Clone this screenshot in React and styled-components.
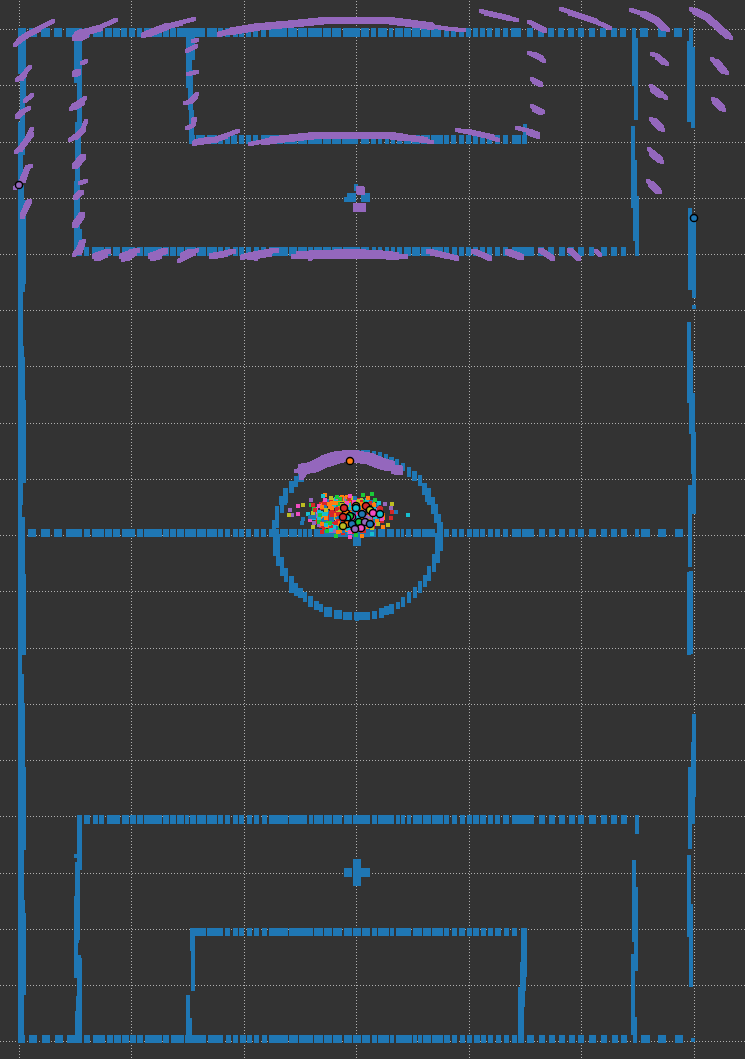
import React from "react";
import styled, { createGlobalStyle } from "styled-components";

const C = {
  blue: "#1f77b4",
  orange: "#ff7f0e",
  green: "#1ac938",
  red: "#d62728",
  purple: "#9467bd",
  pink: "#f14cc1",
  olive: "#bcbd22",
  cyan: "#17becf",
};

const GlobalStyle = createGlobalStyle`
  body {
    margin: 0;
    background: #333333;
  }
`;

const Viewer = styled.main`
  width: 100%;
  background: #333333;
`;

const FieldMap = styled.svg`
  display: block;
  width: 100%;
  height: auto;
  shape-rendering: crispEdges;
`;

const GridLine = styled.path`
  fill: none;
  stroke: #b0b0b0;
  stroke-width: 1;
  stroke-dasharray: 1 2;
`;

const Cell = styled.rect`
  fill: ${(p) => p.$tone};
`;

const Scan = styled.path`
  fill: ${C.purple};
`;

const Pose = styled.circle`
  fill: ${(p) => p.$tone};
  stroke: #000000;
  stroke-width: 1.5;
  shape-rendering: geometricPrecision;
`;

const GRID_X = [19, 131, 244, 356, 469, 581, 694];
const GRID_Y = [29, 85, 142, 198, 254, 310, 366, 423, 479, 535, 591, 648, 704, 760, 816, 873, 929, 985, 1041];

// Runs of marked cells along each horizontal field line: [top, height, "x0-x1 ..."]
const MID_RUNS =
  "225-230 233-238 239-244 247-252 254-259 262-267 269-288 289-313 314-323 324-332 333-342 344-352 353-361 362-370 372-377 378-389 390-394";
const ROWS = [
  [28, 9, "18-26 29-37 41-50 54-62 66-82 84-90 93-103 105-112 113-120 121-127 129-135 137-142 144-162 163-169 170-176 177-184 184-205 207-217 218-223 " +
    "225-230 233-238 239-244 246-251 253-258 261-266 269-287 288-297 298-307 308-322 323-331 332-341 343-360 361-369 371-376 378-387 389-393 395-403 404-411 412-420 421-430 431-441 444-449 451-456 459-464 466-471 473-478 " +
    "480-485 487-492 495-500 503-508 511-521 527-533 538-544 548-554 558-564 568-574 578-584 589-595 600-606 611-617 620-626 640-648 658-666 674-682"],
  [135, 9, "189-195 196-205 207-217 218-223 225-230 231-237 239-244 246-251 253-258 261-283 284-297 298-307 308-322 323-331 332-341 342-358 361-369 371-376 378-382 385-389 391-395 397-402 404-411 412-420 421-430 431-443 444-449 451-456 459-464 466-471 473-478 480-485 487-492 495-500 503-508 512-521 522-527"],
  [247, 9, "84-89 92-104 105-111 113-120 122-135 137-143 144-162 163-169 170-176 177-184 185-196 197-206 207-217 218-223 225-230 233-238 239-244 246-251 254-259 261-266 269-288 289-297 298-307 308-313 314-322 323-331 332-342 343-360 361-369 372-376 378-382 385-389 391-395 397-402 404-411 412-420 421-431 432-443 444-449 452-457 459-464 466-471 473-478 480-485 487-492 495-500 503-508 512-521 521-534 538-544 548-554 559-565 568-574 578-584 589-594 601-607 611-617 621-626"],
  [529, 8, "28-36 41-50 54-62 66-82 84-90 92-104 105-112 113-120 122-135 137-143 144-162 163-169 170-176 177-184 185-196 197-206 207-217 218-223 225-230 233-238 239-244 246-251 254-259 261-266 269-279 280-288 289-297 298-302 303-307 308-312 314-376 378-385 387-394 396-400 401-404 406-411 413-421 422-435 444-449 452-457 459-464 467-472 473-479 480-485 488-493 495-500 503-508 512-521 522-534 539-545 549-555 559-565 569-575 578-584 589-596 601-607 611-617 621-627 635-639 641-650 658-666 675-683"],
  [815, 9, "77-82 84-90 93-98 99-104 107-120 122-129 130-136 137-143 144-162 163-169 170-176 177-184 185-189 190-196 197-206 207-217 218-223 225-230 233-238 239-244 247-252 254-259 262-267 269-288 289-307 309-313 314-323 324-332 333-342 344-352 353-370 372-377 378-390 390-394 396-400 401-405 407-411 413-422 423-431 432-443 444-449 452-457 460-465 467-472 473-479 480-486 488-493 495-500 503-509 512-534 539-545 549-555 559-565 569-575 578-584 589-596 601-607 611-617 621-627"],
  [928, 8, "190-206 207-223 " + MID_RUNS + " 396-411 413-422 423-431 432-443 444-449 452-457 459-465 467-472 473-479 481-486 488-493 495-501 504-509 512-517 521-527"],
  [1035, 8, "18-25 29-37 42-50 55-63 67-82 84-90 93-105 107-113 114-121 122-129 130-136 137-143 145-162 163-169 171-184 185-206 208-223 226-231 233-238 240-246 247-252 254-259 262-267 269-288 289-298 299-313 314-323 324-332 333-342 344-352 353-361 362-370 372-377 378-389 390-394 396-412 413-417 418-422 423-431 432-443 444-450 452-457 460-465 467-472 474-480 481-486 488-493 496-501 504-509 512-517 518-524 527-534 539-545 549-555 559-565 569-575 578-584 589-596 601-607 612-618 621-627 641-650 658-666 675-683"],
];

// Upright lines, the centre circle and the spots: x0, y0, x1, y1
const BLOCKS = [
  // left touchline
  [18, 28, 26, 74], [20, 74, 26, 103], [20, 103, 25, 122], [18, 122, 25, 155], [18, 155, 23, 185], [18, 185, 24, 200],
  [18, 200, 26, 284], [18, 284, 25, 292], [18, 292, 23, 346], [18, 346, 24, 357], [18, 357, 25, 400], [18, 400, 26, 483],
  [18, 483, 23, 505], [18, 505, 22, 517], [18, 517, 25, 574], [18, 574, 26, 655], [18, 655, 22, 674], [18, 674, 24, 703],
  [18, 703, 25, 767], [18, 767, 26, 850], [18, 850, 24, 900], [18, 900, 25, 913], [18, 913, 26, 995], [18, 995, 24, 1043],
  // right touchline
  [689, 28, 693, 47], [687, 41, 693, 122], [691, 47, 695, 128], [688, 208, 692, 290], [692, 216, 696, 298], [692, 305, 696, 309],
  [687, 322, 691, 403], [689, 351, 693, 434], [691, 393, 695, 434], [691, 432, 696, 474], [692, 474, 696, 514], [688, 485, 692, 567],
  [691, 485, 694, 514], [687, 572, 691, 655], [689, 571, 693, 654], [692, 714, 696, 797], [691, 742, 695, 824], [688, 767, 692, 849],
  [687, 855, 691, 937], [689, 904, 693, 987], [691, 1038, 695, 1042],
  // penalty areas
  [74, 28, 82, 83], [77, 83, 82, 130], [75, 122, 81, 160], [75, 160, 80, 185], [74, 181, 80, 229], [74, 229, 82, 256],
  [632, 28, 636, 86], [634, 38, 638, 120], [631, 126, 635, 208], [633, 160, 637, 241], [635, 196, 639, 256],
  [77, 815, 82, 870], [74, 854, 78, 858], [75, 862, 80, 940], [74, 896, 79, 943], [74, 943, 78, 978], [77, 955, 81, 1040],
  [77, 958, 82, 1043], [76, 996, 82, 1043], [75, 1011, 82, 1043],
  [635, 815, 639, 834], [632, 860, 636, 942], [634, 887, 638, 971], [631, 954, 635, 1035], [633, 1017, 637, 1043],
  // goal areas
  [186, 28, 195, 60], [186, 60, 192, 88], [188, 70, 193, 110], [189, 110, 194, 144], [523, 124, 527, 144],
  [190, 928, 195, 951], [191, 951, 195, 991], [186, 995, 190, 1043], [188, 1018, 192, 1043],
  [521, 928, 527, 977], [520, 962, 526, 991], [518, 987, 525, 1007], [518, 1007, 524, 1043],
  // spots
  [354, 184, 358, 191], [347, 193, 356, 202], [344, 197, 348, 202], [361, 193, 370, 202],
  [344, 868, 352, 877], [353, 859, 361, 886], [361, 868, 370, 877], [353, 534, 361, 546],
  // centre circle, clockwise from the top
  [344, 450, 360, 458], [361, 450, 370, 458], [372, 451, 376, 459], [378, 452, 382, 460], [384, 454, 388, 462], [389, 457, 394, 465],
  [395, 459, 399, 467], [401, 463, 405, 471], [407, 467, 411, 477], [412, 471, 417, 481], [418, 475, 422, 486],
  [422, 483, 427, 495], [425, 488, 431, 502], [427, 493, 431, 505], [431, 497, 435, 514], [434, 504, 438, 523],
  [437, 514, 441, 537], [439, 522, 443, 551], [435, 533, 440, 563], [432, 554, 436, 572], [427, 566, 431, 581],
  [423, 575, 427, 587], [418, 581, 422, 593], [413, 587, 417, 598], [407, 592, 411, 603], [401, 597, 405, 607],
  [396, 602, 400, 609], [389, 604, 394, 614], [384, 606, 389, 615], [379, 608, 384, 618], [372, 611, 377, 619],
  [366, 612, 370, 620], [354, 612, 366, 620], [355, 613, 359, 621], [343, 612, 352, 620], [334, 610, 342, 619],
  [324, 607, 332, 617], [319, 604, 323, 612], [314, 601, 319, 610], [308, 596, 313, 607], [303, 592, 307, 602],
  [298, 588, 303, 598], [294, 583, 298, 596], [289, 576, 294, 593], [284, 568, 288, 582], [280, 557, 284, 576],
  [276, 534, 280, 566], [273, 534, 277, 556], [272, 520, 276, 537], [275, 506, 279, 528], [280, 496, 284, 513],
  [279, 496, 287, 505], [283, 488, 288, 503], [289, 481, 294, 493], [294, 476, 298, 487], [298, 472, 304, 482],
];

// Camera observations: [brush size, points]
const SCANS = [
  [4, "15,45 25,36 38,29 53,21"], [5, "18,41 28,34 38,29"], [9, "78,36 84,33"], [6, "75,38 86,32 100,28"], [4, "98,28 116,20"],
  [5, "143,35 160,28 180,23"], [4, "178,23 194,19"], [6, "148,34 168,26"],
  [5, "219,34 240,29"], [7, "232,31 256,27 290,24 320,21 360,20 392,21 415,24 430,26"], [4, "430,26 450,29 464,30"],
  [4, "17,80 22,76 30,67"], [5, "21,78 24,74"], [4, "25,101 32,95"], [5, "17,116 22,112"], [4, "22,112 29,108"], [4, "16,152 23,146 32,129"],
  [5, "20,149 31,134"], [5, "23,180 27,168"], [4, "15,188 20,184 27,167 31,166"], [5, "22,216 29,201"], [5, "25,208 28,202"],
  [4, "82,63 86,61"], [6, "75,74 78,72"], [4, "71,109 85,98"], [6, "74,107 82,102"], [4, "70,140 82,131 86,121"], [5, "75,137 83,129"],
  [6, "75,166 83,157"], [4, "80,183 86,181"], [5, "75,197 81,192"], [6, "75,225 82,215"], [4, "74,255 84,241"], [6, "79,252 82,243"],
  [4, "193,41 197,40"], [4, "187,51 196,46"], [4, "188,74 197,72"], [4, "185,103 190,102 197,94"], [5, "190,101 195,96"],
  [4, "187,128 193,125 195,119"], [5, "193,123 194,119"],
  [5, "194,143 215,140"], [5, "213,140 225,136"], [4, "224,136 238,131"], [6, "197,142 210,140"],
  [5, "94,256 108,251"], [7, "97,257 104,254"], [5, "121,256 137,250"], [7, "126,257 133,252"], [4, "123,260 130,256"],
  [6, "151,256 165,251"], [4, "152,259 160,257"], [4, "179,261 197,250"], [7, "183,256 192,252"], [6, "212,256 225,254"], [5, "222,254 233,251"],
  [5, "242,257 254,254 276,250"], [7, "250,256 268,253"], [4, "256,259 257,256"],
  [5, "293,256 405,256"], [8, "300,255 325,254 350,253 375,254 395,256"], [4, "310,259 311,258"],
  [4, "250,144 270,140"], [6, "264,142 300,137 345,135 385,135 410,138 425,140"], [7, "272,140 310,136 345,135 385,135 400,137"], [4, "420,140 432,142"],
  [5, "428,251 440,254 456,258"], [5, "432,253 446,256"], [5, "473,251 489,258"], [6, "508,252 521,257"], [5, "540,250 552,258"],
  [5, "569,250 578,258"], [4, "596,251 600,255"],
  [4, "457,130 480,134 498,140"], [5, "465,131 492,137"], [4, "517,128 530,131 538,137"], [6, "529,132 537,135"],
  [8, "360,190 361,191"], [9, "357,207 361,207"], [5, "355,209 363,209"],
  [4, "481,11 500,16 517,20"], [5, "486,13 508,18"], [4, "529,22 536,25 545,31"], [5, "534,25 544,30"],
  [4, "529,53 537,56 544,61"], [5, "533,54 541,58"], [4, "532,79 541,85"], [5, "534,81 540,84"], [4, "532,106 543,112"], [5, "534,109 540,112"],
  [4, "561,9 585,17 610,28"], [5, "570,13 595,21"],
  [4, "631,10 650,16 668,30"], [6, "643,14 656,20 664,28"], [4, "691,9 708,18 731,38"], [6, "695,11 708,18 728,36"],
  [4, "652,54 658,56 667,64"], [5, "657,57 663,62"], [4, "651,86 666,98"], [6, "653,89 661,95"], [4, "651,119 663,130"], [6, "654,121 661,128"],
  [4, "649,149 662,162"], [6, "652,153 660,160"], [4, "648,181 660,192"], [6, "651,184 658,191"],
  [4, "712,59 727,73"], [6, "716,62 724,71"], [4, "713,99 724,110"], [6, "715,101 722,108"],
  [4, "296,471 310,468"], [10, "303,469 314,467 325,461"], [11, "325,461 338,457 352,456 365,458"], [10, "340,456 352,455 368,458 380,463 390,466"],
  [5, "301,477 305,471"], [6, "390,467 400,470"], [9, "395,469 398,470"],
];

const TONES = [C.red, C.blue, C.olive, C.cyan, C.pink, C.red, C.orange, C.purple, C.red, C.blue, C.green, C.orange];

const STRAYS = [
  [298, 506, "pink"], [303, 505, "olive"], [290, 510, "purple"], [298, 514, "pink"], [292, 515, "purple"], [289, 515, "olive"],
  [308, 514, "cyan"], [303, 519, "blue"], [302, 523, "blue"], [311, 500, "purple"], [311, 505, "green"], [313, 505, "red"],
  [310, 520, "pink"], [313, 527, "olive"], [310, 517, "blue"], [314, 523, "purple"], [408, 515, "cyan"], [392, 504, "olive"],
  [391, 508, "purple"], [392, 512, "red"], [396, 512, "blue"], [391, 518, "red"], [350, 496, "pink"], [363, 495, "green"],
  [372, 494, "green"], [375, 500, "green"], [368, 498, "orange"], [379, 503, "cyan"], [325, 495, "orange"], [323, 496, "cyan"],
  [325, 500, "pink"], [331, 498, "olive"], [337, 497, "green"], [340, 499, "green"], [355, 498, "blue"], [385, 504, "purple"],
  [388, 525, "olive"], [383, 527, "orange"], [372, 534, "cyan"], [362, 536, "orange"], [336, 536, "green"], [350, 537, "pink"],
  [356, 535, "green"], [322, 532, "red"], [327, 531, "green"], [332, 503, "orange"], [336, 503, "orange"], [329, 504, "orange"],
];

// Particle cloud from a small linear congruential generator, so each render is the same
function makeCloud(count) {
  let seed = 4711;
  const next = () => {
    seed = (seed * 16807) % 2147483647;
    return seed / 2147483647;
  };
  const cloud = [];
  while (cloud.length < count) {
    const a = next() * Math.PI * 2;
    const r = Math.pow(next(), 0.55);
    const x = Math.round(348 + Math.cos(a) * r * 36);
    const y = Math.round(515 + Math.sin(a) * r * 18);
    cloud.push([x, y, TONES[Math.floor(next() * TONES.length)]]);
  }
  return cloud;
}

const CLOUD = makeCloud(400);

const POSES = [
  [19, 185, "purple"], [694, 218, "blue"], [350, 461, "orange"],
  [356, 506, "olive"], [366, 506, "red"], [346, 513, "orange"], [352, 517, "pink"], [350, 516, "green"], [347, 518, "cyan"],
  [370, 510, "olive"], [344, 508, "red"], [356, 508, "cyan"], [362, 514, "blue"], [373, 513, "pink"], [380, 514, "cyan"],
  [343, 517, "red"], [347, 524, "orange"], [352, 524, "blue"], [359, 522, "green"], [365, 522, "purple"], [370, 524, "blue"],
  [343, 526, "olive"], [361, 528, "pink"], [355, 529, "purple"],
];

// Stamps a square brush on whole cells along a line of points
function stampLine(size, points) {
  const stops = points.split(" ").map((p) => p.split(",").map(Number));
  const marks = new Set();
  for (let i = 1; i < stops.length; i += 1) {
    const [ax, ay] = stops[i - 1];
    const [bx, by] = stops[i];
    const steps = Math.max(Math.abs(bx - ax), Math.abs(by - ay), 1);
    for (let s = 0; s <= steps; s += 1) {
      const x = Math.round(ax + ((bx - ax) * s) / steps - size / 2);
      const y = Math.round(ay + ((by - ay) * s) / steps - size / 2);
      marks.add(`M${x} ${y}h${size}v${size}h${-size}z`);
    }
  }
  return [...marks].join("");
}

function Grid() {
  return (
    <g>
      {GRID_Y.map((y) => (
        <GridLine key={y} d={`M0 ${y + 0.5}H745`} />
      ))}
      {GRID_X.map((x) => (
        <GridLine key={x} d={`M${x + 0.5} 1V1059`} />
      ))}
    </g>
  );
}

function FieldLines() {
  return (
    <g>
      {ROWS.map(([top, height, runs]) =>
        runs.split(" ").map((run) => {
          const [from, to] = run.split("-").map(Number);
          return <Cell key={`${top}-${from}`} x={from} y={top} width={to - from} height={height} $tone={C.blue} />;
        })
      )}
      {BLOCKS.map(([x0, y0, x1, y1], i) => (
        <Cell key={i} x={x0} y={y0} width={x1 - x0} height={y1 - y0} $tone={C.blue} />
      ))}
    </g>
  );
}

function Observations() {
  return (
    <g>
      {SCANS.map(([size, points], i) => (
        <Scan key={i} d={stampLine(size, points)} />
      ))}
    </g>
  );
}

function Particles() {
  return (
    <g>
      {CLOUD.map(([x, y, tone], i) => (
        <Cell key={i} x={x - 2} y={y - 2} width={4} height={4} $tone={tone} />
      ))}
      {STRAYS.map(([x, y, name], i) => (
        <Cell key={i} x={x - 2} y={y - 2} width={4} height={4} $tone={C[name]} />
      ))}
    </g>
  );
}

function Poses() {
  return (
    <g>
      {POSES.map(([x, y, name], i) => (
        <Pose key={i} cx={x} cy={y} r={3.6} $tone={C[name]} />
      ))}
    </g>
  );
}

export default function App() {
  return (
    <>
      <GlobalStyle />
      <Viewer>
        <FieldMap viewBox="0 0 745 1059" role="img" aria-label="Field map">
          <Grid />
          <FieldLines />
          <Observations />
          <Particles />
          <Poses />
        </FieldMap>
      </Viewer>
    </>
  );
}
